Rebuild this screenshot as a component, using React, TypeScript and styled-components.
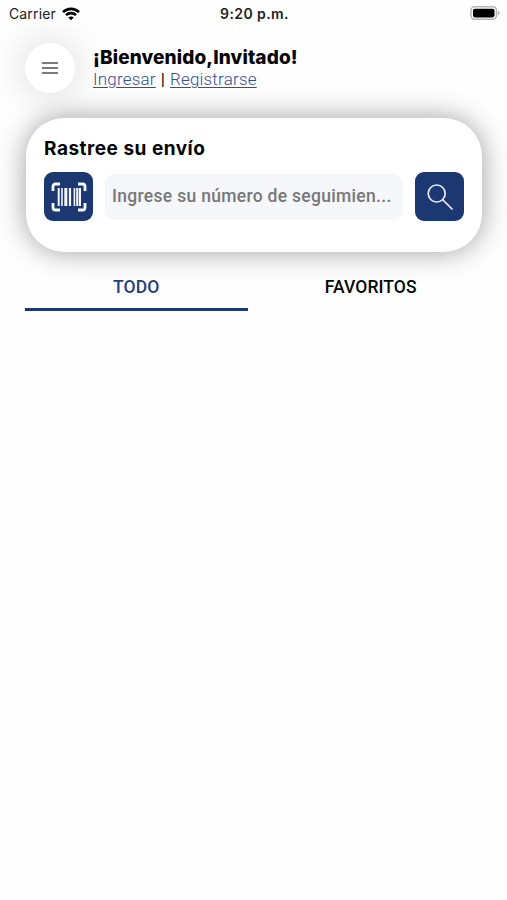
import React from "react";
import styled, { createGlobalStyle } from "styled-components";

const navy = "#1c3872";

const GlobalStyle = createGlobalStyle`
  * { box-sizing: border-box; }
  html, body { margin: 0; background: #fefefe; }
  body { font-family: Roboto, "Liberation Sans", sans-serif; color: #050505; overflow: hidden; }
  button, input { font: inherit; border: 0; padding: 0; }
`;

const Screen = styled.div`
  height: 900px;
  padding: 0 25px;
  overflow: hidden;
`;

const StatusBar = styled.header`
  display: grid;
  grid-template-columns: 1fr auto 1fr;
  align-items: center;
  height: 28px;
  margin: 0 -18px 0 -16px;
  font-family: Inter, sans-serif;
  font-size: 14px;
  line-height: 28px;
  color: #222;
`;

const Carrier = styled.div`
  display: flex;
  align-items: center;
  gap: 6px;
  height: 26px;
  letter-spacing: 0.14px;
`;

const Time = styled.time`
  font-weight: 600;
  letter-spacing: 0.4px;
`;

const BatteryIcon = styled.svg`
  justify-self: end;
  display: block;
  margin-top: -2px;
`;

const Welcome = styled.section`
  display: flex;
  align-items: center;
  gap: 18px;
  height: 50px;
  margin-top: 15px;
`;

const MenuButton = styled.button`
  display: grid;
  place-items: center;
  flex: none;
  width: 50px;
  height: 50px;
  border-radius: 50%;
  background: #fff;
  box-shadow: 0 0 38px rgba(0, 0, 0, 0.16);
`;

const Greeting = styled.h1`
  margin: 0;
  font-family: Inter, sans-serif;
  font-size: 19px;
  line-height: 24px;
  font-weight: 800;
  letter-spacing: 0.12px;
  white-space: nowrap;
`;

const AuthLinks = styled.nav`
  display: flex;
  gap: 5px;
  margin-top: -2px;
  font-size: 17px;
  line-height: 22px;
  font-weight: 300;
  white-space: nowrap;
`;

const AuthLink = styled.a`
  color: #34508f;
  letter-spacing: 0.2px;
  text-decoration: underline;
  text-decoration-thickness: 1px;
  text-underline-offset: 2px;
`;

const Divider = styled.span`
  font-weight: 400;
`;

const TrackingCard = styled.section`
  height: 134px;
  margin: 25px 0 0 1px;
  width: 456px;
  padding: 19px 18px 0;
  border-radius: 38px;
  background: #fff;
  box-shadow: 0 0 28px rgba(0, 0, 0, 0.38);
`;

const CardTitle = styled.h2`
  margin: 0 0 11px;
  font-family: Inter, sans-serif;
  font-size: 19px;
  line-height: 24px;
  font-weight: 700;
  letter-spacing: 0.5px;
`;

const SearchRow = styled.form`
  display: grid;
  grid-template-columns: 49px 298px 49px;
  gap: 12px;
  align-items: center;
`;

const ActionButton = styled.button`
  display: grid;
  place-items: center;
  width: 49px;
  height: 49px;
  border-radius: 9px;
  background: ${navy};
`;

const TrackingInput = styled.input`
  width: 298px;
  height: 46px;
  padding: 0 7px 1px;
  border-radius: 9px;
  background: #f5f7fb;
  font-size: 17.5px;
  font-weight: 500;
  letter-spacing: 0.3px;
  outline: 0;
  &::placeholder { color: #777; opacity: 1; }
`;

const Tabs = styled.div`
  display: flex;
  gap: 12px;
  margin-top: 15px;
`;

const Tab = styled.button<{ $active?: boolean }>`
  width: 223px;
  height: 44px;
  padding-bottom: 1px;
  background: none;
  border-bottom: 3px solid ${(p) => (p.$active ? navy : "transparent")};
  color: ${(p) => (p.$active ? "#233d80" : "#050505")};
  font-size: 17.5px;
  font-weight: 500;
  letter-spacing: 0.1px;
`;

export default function App() {
  return (
    <Screen>
      <GlobalStyle />
      <StatusBar>
        <Carrier>
          <span>Carrier</span>
          <svg width="18" height="14" viewBox="0 0 18 14" fill="none" stroke="#000" strokeWidth="2.6">
            <path d="M1 5.1C5.4 .8 12.6.8 17 5.1M4 8.1c2.8-2.7 7.2-2.7 10 0" />
            <path d="M6.3 10.5c1.5-1.5 3.9-1.5 5.4 0L9 13.2Z" fill="#000" stroke="none" />
          </svg>
        </Carrier>
        <Time>9:20 p.m.</Time>
        <BatteryIcon width="30" height="14" viewBox="0 0 30 14">
          <rect x="1" y=".8" width="25.5" height="12.4" rx="3.6" fill="#fff" stroke="#b5b5b5" strokeWidth="1.5" />
          <rect x="3" y="2.8" width="21.5" height="8.6" rx="1.8" />
          <path d="M28 5v4c2-.7 2-3.3 0-4Z" fill="#aaa" />
        </BatteryIcon>
      </StatusBar>
      <Welcome>
        <MenuButton aria-label="Menú">
          <svg width="16" height="14" viewBox="0 0 16 14" stroke="#505050" strokeWidth="1.6">
            <path d="M0 2h16M0 7h16M0 12h16" />
          </svg>
        </MenuButton>
        <div>
          <Greeting>¡Bienvenido,Invitado!</Greeting>
          <AuthLinks>
            <AuthLink href="#">Ingresar</AuthLink>
            <Divider>|</Divider>
            <AuthLink href="#">Registrarse</AuthLink>
          </AuthLinks>
        </div>
      </Welcome>
      <TrackingCard>
        <CardTitle>Rastree su envío</CardTitle>
        <SearchRow>
          <ActionButton type="button" aria-label="Escanear código">
            <svg width="36" height="30" viewBox="0 0 36 30" fill="none" stroke="#f5f8ff">
              <path d="M9 2H4.5Q2 2 2 4.5V9M27 2h4.5Q34 2 34 4.5V9M2 21v4.5Q2 28 4.5 28H9M34 21v4.5Q34 28 31.5 28H27" strokeWidth="2.8" />
              <path d="M7.7 6v18M29 6v18" strokeWidth="2" />
              <path d="M11 6v18M23.4 6v18" strokeWidth="1.6" />
              <path d="M14.8 6v18" strokeWidth="3" />
              <path d="M19 6v18M26.3 6v18" strokeWidth="2.2" />
            </svg>
          </ActionButton>
          <TrackingInput placeholder="Ingrese su número de seguimien..." />
          <ActionButton type="button" aria-label="Buscar">
            <svg width="26" height="26" viewBox="0 0 26 26" fill="none" stroke="#e6ecf8" strokeWidth="1.7" strokeLinecap="round">
              <circle cx="9.7" cy="9.5" r="8.5" />
              <path d="m16 16 9 9" />
            </svg>
          </ActionButton>
        </SearchRow>
      </TrackingCard>
      <Tabs>
        <Tab $active>TODO</Tab>
        <Tab>FAVORITOS</Tab>
      </Tabs>
    </Screen>
  );
}
